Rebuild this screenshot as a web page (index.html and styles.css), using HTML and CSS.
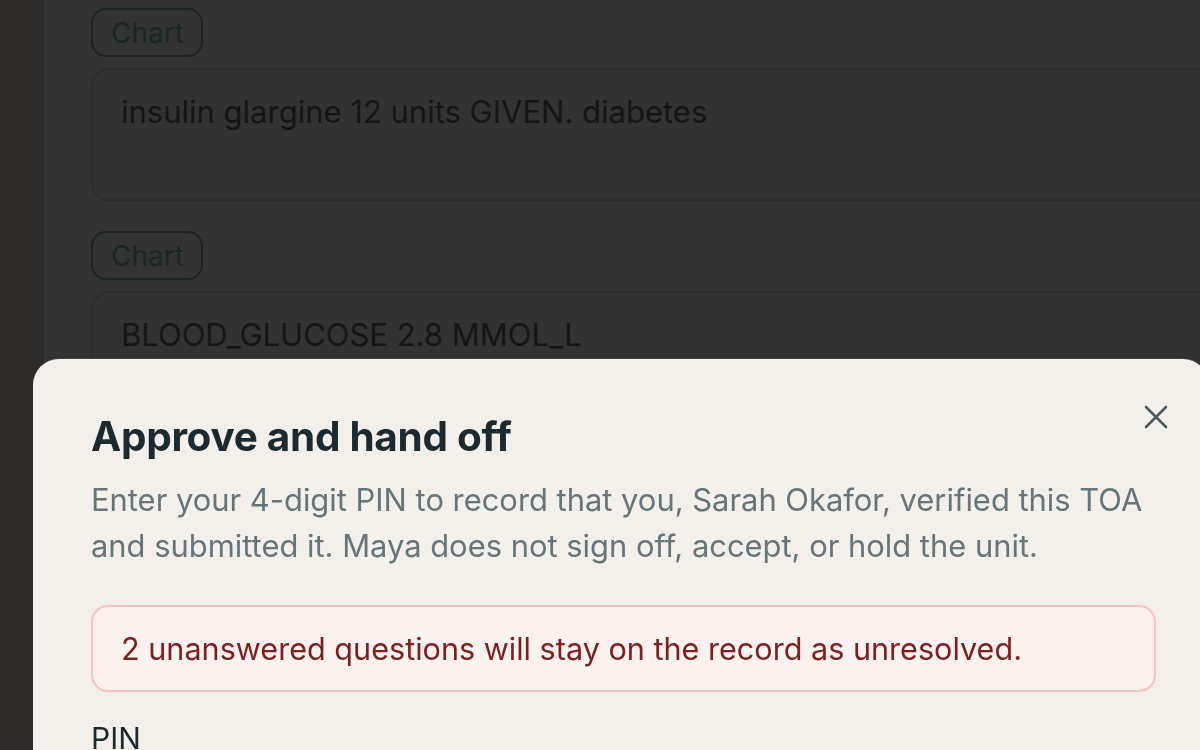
FILE: index.html
```html
<!DOCTYPE html>
<html lang="en">
<head>
<meta charset="utf-8">
<title>Approve and hand off</title>
<link rel="stylesheet" href="styles.css">
</head>
<body>
<div class="app">
  <aside class="sidebar"></aside>
  <main class="main">
    <section class="entry">
      <span class="chip">Chart</span>
      <div class="card">insulin glargine 12 units GIVEN. diabetes</div>
    </section>
    <section class="entry">
      <span class="chip">Chart</span>
      <div class="card">BLOOD_GLUCOSE 2.8 MMOL_L</div>
    </section>
  </main>
</div>
<div class="modal" role="dialog" aria-labelledby="modal-title">
  <div class="modal-head">
    <h2 id="modal-title" class="modal-title">Approve and hand off</h2>
    <button class="close" aria-label="Close">
      <svg width="24" height="24" viewBox="0 0 24 24" fill="none" stroke="currentColor" stroke-width="2.6" stroke-linecap="round"><path d="M2 2L22 22M22 2L2 22"/></svg>
    </button>
  </div>
  <p class="modal-desc">Enter your 4-digit PIN to record that you, Sarah Okafor, verified this TOA and submitted it. Maya does not sign off, accept, or hold the unit.</p>
  <div class="alert">2 unanswered questions will stay on the record as unresolved.</div>
  <label class="pin-label">PIN</label>
</div>
</body>
</html>
```
FILE: styles.css
```css
html, body {
  margin: 0;
  padding: 0;
  height: 100%;
  overflow: hidden;
}
body {
  background: #333333;
  font-family: Inter, "Open Sans", sans-serif;
  color: #161616;
}
.app {
  display: flex;
  min-height: 100vh;
}
.sidebar {
  width: 42px;
  flex: none;
  background: #2c2b29;
  border-right: 2px solid #2a2a29;
}
.main {
  flex: 1;
  padding: 8px 0 0 47px;
  display: flex;
  flex-direction: column;
  gap: 30px;
  min-width: 0;
}
.entry {
  display: flex;
  flex-direction: column;
  align-items: flex-start;
  gap: 11px;
}
.chip {
  box-sizing: border-box;
  height: 49px;
  display: inline-flex;
  align-items: center;
  padding: 0 17px 0 18px;
  border: 2px solid #1a2521;
  border-radius: 15px;
  font-size: 28px;
  color: #1a2621;
}
.card {
  box-sizing: border-box;
  width: calc(100% + 40px);
  height: 133px;
  padding: 21px 28px;
  border: 2px solid #2d2d2d;
  border-radius: 18px;
  background: #323232;
  font-size: 31px;
  line-height: 42px;
  color: #151515;
}
.modal {
  position: fixed;
  left: 33px;
  top: 359px;
  width: 1176px;
  height: 500px;
  box-sizing: border-box;
  padding: 50px 41px 0 58px;
  background: #f3f0eb;
  border-radius: 26px;
  box-shadow: 0 -1px 0 rgba(255,255,255,0.08);
}
.modal-head {
  display: flex;
  justify-content: space-between;
  align-items: flex-start;
}
.modal-title {
  margin: 0;
  font-size: 40.5px;
  line-height: 56px;
  font-weight: 700;
  color: #1c2a30;
  letter-spacing: -0.3px;
}
.close {
  margin: -4px 0 0 0;
  padding: 0;
  border: 0;
  background: none;
  color: #4d5a5f;
  width: 24px;
  height: 24px;
  display: flex;
  cursor: pointer;
}
.modal-desc {
  margin: 12px 0 0 0;
  width: 1075px;
  font-size: 30.9px;
  line-height: 46px;
  color: #66757a;
}
.alert {
  box-sizing: border-box;
  margin-top: 36px;
  width: 1065px;
  height: 87px;
  display: flex;
  align-items: center;
  padding: 0 28px;
  background: #fbf1ef;
  border: 2px solid #f5c5c3;
  border-radius: 17px;
  font-size: 30.6px;
  color: #7c1f1f;
}
.pin-label {
  display: block;
  margin-top: 28px;
  font-size: 30px;
  color: #1c2a30;
}
```
